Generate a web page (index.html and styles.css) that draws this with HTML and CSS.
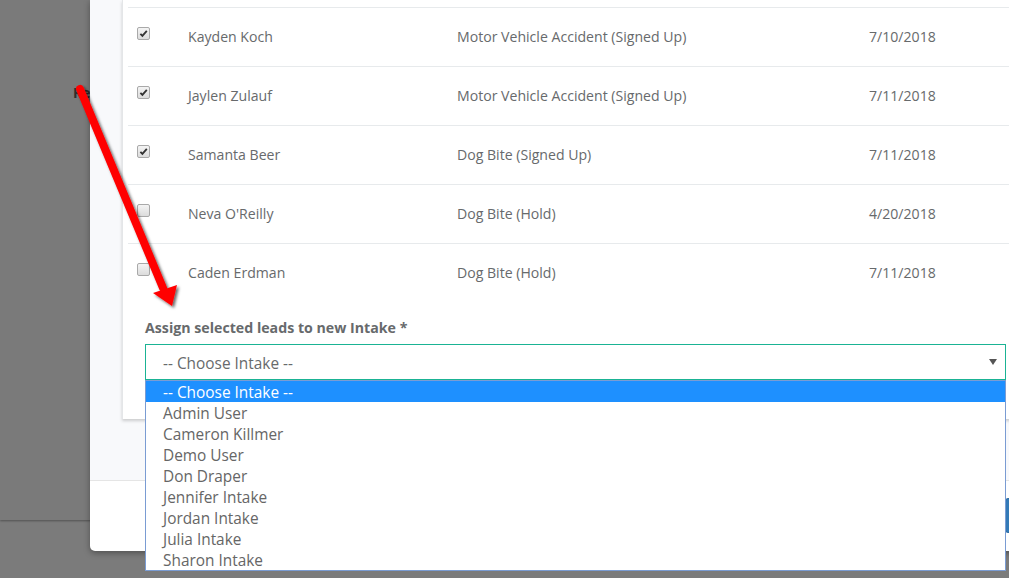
FILE: index.html
```html
<!DOCTYPE html>
<html>
<head>
<meta charset="utf-8">
<link rel="stylesheet" href="styles.css">
</head>
<body>
<div class="page">
  <div class="behind"><span class="behind-text">Reassign</span></div>
  <div class="modal">
    <div class="modal-body">
      <div class="panel">
        <div class="table">
          <div class="row">
            <div class="cell-check"><span class="cb checked"><svg viewBox="0 0 12 12"><path d="M2.6 6.4 L4.8 8.6 L9.6 3.2" fill="none" stroke="#333" stroke-width="2"/></svg></span></div>
            <div>Kayden Koch</div>
            <div>Motor Vehicle Accident (Signed Up)</div>
            <div>7/10/2018</div>
          </div>
          <div class="row">
            <div class="cell-check"><span class="cb checked"><svg viewBox="0 0 12 12"><path d="M2.6 6.4 L4.8 8.6 L9.6 3.2" fill="none" stroke="#333" stroke-width="2"/></svg></span></div>
            <div>Jaylen Zulauf</div>
            <div>Motor Vehicle Accident (Signed Up)</div>
            <div>7/11/2018</div>
          </div>
          <div class="row">
            <div class="cell-check"><span class="cb checked"><svg viewBox="0 0 12 12"><path d="M2.6 6.4 L4.8 8.6 L9.6 3.2" fill="none" stroke="#333" stroke-width="2"/></svg></span></div>
            <div>Samanta Beer</div>
            <div>Dog Bite (Signed Up)</div>
            <div>7/11/2018</div>
          </div>
          <div class="row">
            <div class="cell-check"><span class="cb"></span></div>
            <div>Neva O'Reilly</div>
            <div>Dog Bite (Hold)</div>
            <div>4/20/2018</div>
          </div>
          <div class="row">
            <div class="cell-check"><span class="cb"></span></div>
            <div>Caden Erdman</div>
            <div>Dog Bite (Hold)</div>
            <div>7/11/2018</div>
          </div>
        </div>
        <div class="form-group">
          <label class="form-label">Assign selected leads to new Intake *</label>
          <div class="select-wrap">
            <div class="select"><span>-- Choose Intake --</span><span class="caret"></span></div>
            <ul class="dropdown">
              <li class="active">-- Choose Intake --</li>
              <li>Admin User</li>
              <li>Cameron Killmer</li>
              <li>Demo User</li>
              <li>Don Draper</li>
              <li>Jennifer Intake</li>
              <li>Jordan Intake</li>
              <li>Julia Intake</li>
              <li>Sharon Intake</li>
            </ul>
          </div>
        </div>
      </div>
    </div>
    <div class="modal-footer"><button class="btn">Save</button></div>
  </div>
  <svg class="arrow" width="1009" height="578" viewBox="0 0 1009 578">
    <defs>
      <filter id="sh" x="-20%" y="-20%" width="140%" height="140%">
        <feDropShadow dx="2" dy="2" stdDeviation="1.6" flood-color="#000" flood-opacity="0.6"/>
      </filter>
    </defs>
    <g filter="url(#sh)" fill="#ff0000">
      <line x1="80" y1="89" x2="163" y2="288" stroke="#ff0000" stroke-width="8" stroke-linecap="round"/>
      <polygon points="153,293 172,306 177,285"/>
    </g>
  </svg>
</div>
</body>
</html>
```
FILE: styles.css
```css
* { box-sizing: border-box; }
html, body { margin: 0; padding: 0; }
body {
  background: #7b7b7b;
  font-family: "Open Sans", "Liberation Sans", sans-serif;
  color: #676a6c;
}
.page {
  position: relative;
  width: 1009px;
  height: 578px;
  overflow: hidden;
}
.behind {
  height: 520px;
  background: #7a7a7a;
  box-shadow: 0 1px 2px rgba(0,0,0,0.35);
  padding: 81px 0 0 73px;
}
.behind-text {
  font-weight: bold;
  font-size: 14px;
  color: #2e2e2e;
}
.modal {
  position: absolute;
  left: 90px;
  top: 0;
  width: 1000px;
  height: 551px;
  background: #fff;
  border-radius: 0 0 0 5px;
  box-shadow: 0 2px 6px rgba(0,0,0,0.35);
  display: flex;
  flex-direction: column;
}
.modal-body {
  height: 480px;
  background: #f8f9fb;
  padding-left: 32px;
}
.panel {
  height: 419px;
  background: #fff;
  border-left: 1px solid #e4e6e8;
  box-shadow: 0 2px 3px rgba(0,0,0,0.18);
  padding-top: 7px;
}
.table {
  margin-left: 5px;
}
.row {
  display: grid;
  grid-template-columns: 60px 269px 412px 1fr;
  align-items: center;
  height: 59px;
  padding-bottom: 2px;
  border-top: 1px solid #e7eaec;
  font-size: 14.1px;
}
.cell-check {
  padding-left: 9px;
  display: flex;
  margin-top: -6px;
}
.cb {
  width: 13px;
  height: 13px;
  border: 1px solid #a9a9a9;
  border-radius: 2px;
  background: linear-gradient(#f4f4f4, #dcdcdc);
  display: flex;
  align-items: center;
  justify-content: center;
}
.cb svg { width: 11px; height: 11px; }
.form-group {
  margin-left: 22px;
  padding-top: 16px;
}
.form-label {
  display: block;
  font-size: 14.2px;
  font-weight: bold;
  line-height: 19px;
  margin-bottom: 7px;
}
.select-wrap {
  position: relative;
  width: 861px;
}
.select {
  height: 36px;
  border: 1px solid #1ab394;
  padding: 2px 8px 0 17px;
  display: flex;
  align-items: center;
  justify-content: space-between;
  font-size: 15.4px;
  color: #676a6c;
  background: #fff;
}
.caret {
  width: 0;
  height: 0;
  border-left: 4px solid transparent;
  border-right: 4px solid transparent;
  border-top: 6px solid #555;
  margin-top: -2px;
}
.dropdown {
  position: absolute;
  top: 100%;
  left: 0;
  width: 861px;
  margin: 0;
  padding: 0;
  list-style: none;
  background: #fff;
  border: 1px solid #7a9cd3;
  z-index: 5;
}
.dropdown li {
  height: 21px;
  line-height: 23px;
  font-size: 15.4px;
  padding-left: 17px;
  color: #666;
}
.dropdown li.active {
  background: #1e90ff;
  color: #fff;
}
.modal-footer {
  border-top: 1px solid #e5e5e5;
  flex: 1;
  display: flex;
  align-items: flex-start;
  padding: 17px 0 0 915px;
}
.btn {
  height: 35px;
  background: #337ab7;
  color: #fff;
  border: 1px solid #2e6da4;
  border-radius: 3px;
  font-family: "Open Sans", sans-serif;
  font-size: 14px;
  padding: 0 12px;
}
.arrow {
  position: absolute;
  left: 0;
  top: 0;
  pointer-events: none;
  z-index: 10;
}
```
